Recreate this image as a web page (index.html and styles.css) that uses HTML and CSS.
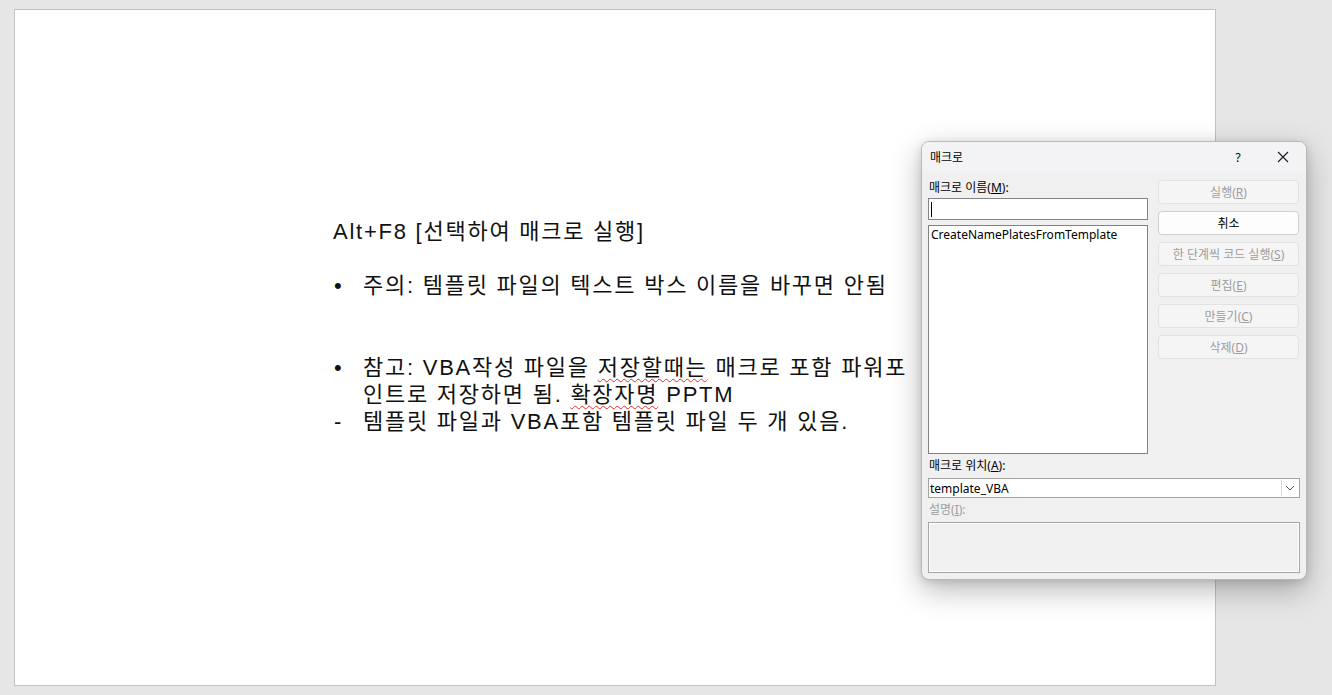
FILE: index.html
```html
<!DOCTYPE html>
<html lang="ko">
<head>
<meta charset="utf-8">
<title>매크로</title>
<link rel="stylesheet" href="styles.css">
</head>
<body>
<div class="slide">
  <div class="textbox">
    <p class="line title">Alt+F8 [선택하여 매크로 실행]</p>
    <div class="item first"><span class="mark">•</span><span>주의: 템플릿 파일의 텍스트 박스 이름을 바꾸면 안됨</span></div>
    <div class="item second"><span class="mark">•</span><div class="lines"><div>참고: VBA작성 파일을 <span class="spell">저장할때는</span> 매크로 포함 파워포</div><div>인트로 저장하면 됨. <span class="spell">확장자명</span> PPTM</div></div></div>
    <div class="item"><span class="mark">-</span><span>템플릿 파일과 VBA포함 템플릿 파일 두 개 있음.</span></div>
  </div>
</div>

<div class="dialog">
  <div class="titlebar">
    <span class="dtitle">매크로</span>
    <span class="tb-help">?</span>
    <span class="tb-close">
      <svg width="12" height="12" viewBox="0 0 12 12"><path d="M1 1 L11 11 M11 1 L1 11" stroke="#1a1a1a" stroke-width="1.1" fill="none"/></svg>
    </span>
  </div>
  <div class="dbody">
    <div class="cols">
      <div class="leftcol">
        <div class="lbl">매크로 이름(<u>M</u>):</div>
        <div class="input"><span class="caret"></span></div>
        <div class="listbox"><div class="listitem">CreateNamePlatesFromTemplate</div></div>
      </div>
      <div class="rightcol">
        <div class="btn dis">실행(<u>R</u>)</div>
        <div class="btn act">취소</div>
        <div class="btn dis">한 단계씩 코드 실행(<u>S</u>)</div>
        <div class="btn dis">편집(<u>E</u>)</div>
        <div class="btn dis">만들기(<u>C</u>)</div>
        <div class="btn dis">삭제(<u>D</u>)</div>
      </div>
    </div>
    <div class="lbl lbl2">매크로 위치(<u>A</u>):</div>
    <div class="select">
      <span class="selval">template_VBA</span>
      <span class="dropbtn"><svg width="10" height="6" viewBox="0 0 10 6"><path d="M1 1 L5 5 L9 1" stroke="#555" stroke-width="1" fill="none"/></svg></span>
    </div>
    <div class="lbl lbl3 gray">설명(<u>I</u>):</div>
    <div class="desc"></div>
  </div>
</div>
</body>
</html>
```

FILE: styles.css
```css
html, body {
  margin: 0;
  padding: 0;
}
body {
  width: 1332px;
  height: 695px;
  overflow: hidden;
  background: #e6e6e6;
  font-family: "Noto Sans", "Noto Sans CJK KR", sans-serif;
  position: relative;
}
.slide {
  margin: 9px 0 0 14px;
  width: 1202px;
  height: 677px;
  background: #ffffff;
  border: 1px solid #c3c3c3;
  box-sizing: border-box;
  padding: 208px 0 0 318px;
}
.textbox {
  font-family: "Liberation Sans", "Noto Sans CJK KR", sans-serif;
  font-size: 22px;
  color: #111;
  line-height: 27px;
  letter-spacing: 1.75px;
  white-space: nowrap;
}
.line {
  margin: 0;
}
.item {
  display: flex;
}
.item.first {
  margin-top: 27px;
}
.item.second {
  margin-top: 55px;
}
.mark {
  width: 29px;
  flex: none;
  padding-left: 1px;
  letter-spacing: 0;
}
.spell {
  text-decoration: underline wavy #e0302a;
  text-decoration-thickness: 1px;
  text-underline-offset: 3px;
}

.dialog {
  position: absolute;
  left: 921px;
  top: 141px;
  width: 386px;
  height: 439px;
  box-sizing: border-box;
  border: 1px solid #b9b9b9;
  border-radius: 8px;
  background: #f0f0f0;
  box-shadow: 0 10px 30px rgba(0, 0, 0, 0.28), 0 2px 8px rgba(0, 0, 0, 0.12);
  overflow: hidden;
  font-family: "Noto Sans", "Noto Sans CJK KR", sans-serif;
  font-size: 12px;
  color: #000;
}
.titlebar {
  height: 30px;
  background: #f3f3f6;
  display: flex;
  align-items: center;
  padding-left: 8px;
  position: relative;
}
.dtitle {
  font-size: 12px;
  flex: 1;
}
.tb-help {
  width: 46px;
  text-align: center;
  font-size: 12px;
}
.tb-close {
  width: 44px;
  display: flex;
  justify-content: center;
  align-items: center;
  margin-right: 1px;
}
.dbody {
  padding: 7px 6px 0 6px;
}
.cols {
  display: flex;
  gap: 10px;
}
.leftcol {
  width: 220px;
  display: flex;
  flex-direction: column;
}
.lbl {
  height: 17px;
  line-height: 17px;
  padding-left: 1px;
}
.lbl u {
  text-underline-offset: 1px;
}
.input {
  margin-top: 2px;
  height: 22px;
  box-sizing: border-box;
  border: 1px solid #848484;
  background: #fff;
  position: relative;
}
.caret {
  position: absolute;
  left: 2px;
  top: 3px;
  width: 1px;
  height: 15px;
  background: #000;
}
.listbox {
  margin-top: 5px;
  height: 229px;
  box-sizing: border-box;
  border: 1px solid #828282;
  background: #fff;
  padding: 1px 2px;
}
.listitem {
  line-height: 16px;
}
.rightcol {
  width: 141px;
  margin-top: 1px;
  display: flex;
  flex-direction: column;
  gap: 7px;
}
.btn {
  height: 24px;
  box-sizing: border-box;
  border-radius: 4px;
  display: flex;
  align-items: center;
  justify-content: center;
}
.btn.dis {
  background: #f5f5f5;
  border: 1px solid #e2e2e2;
  color: #9d9d9d;
}
.btn.act {
  background: #fdfdfd;
  border: 1px solid #cfcfcf;
  color: #000;
}
.lbl2 {
  margin-top: 3px;
}
.select {
  margin-top: 4px;
  height: 20px;
  box-sizing: border-box;
  border: 1px solid #a2a2a2;
  background: #fff;
  display: flex;
  align-items: center;
}
.selval {
  flex: 1;
  padding-left: 1px;
}
.dropbtn {
  width: 17px;
  height: 16px;
  margin-right: 1px;
  box-sizing: border-box;
  border-left: 1px solid #dadada;
  display: flex;
  align-items: center;
  justify-content: center;
}
.lbl3 {
  margin-top: 3px;
}
.gray {
  color: #9d9d9d;
}
.desc {
  margin-top: 4px;
  height: 51px;
  box-sizing: border-box;
  border: 1px solid #a5a5a5;
  box-shadow: inset 0 0 0 1px #ffffff;
  background: #f0f0f0;
}
```
